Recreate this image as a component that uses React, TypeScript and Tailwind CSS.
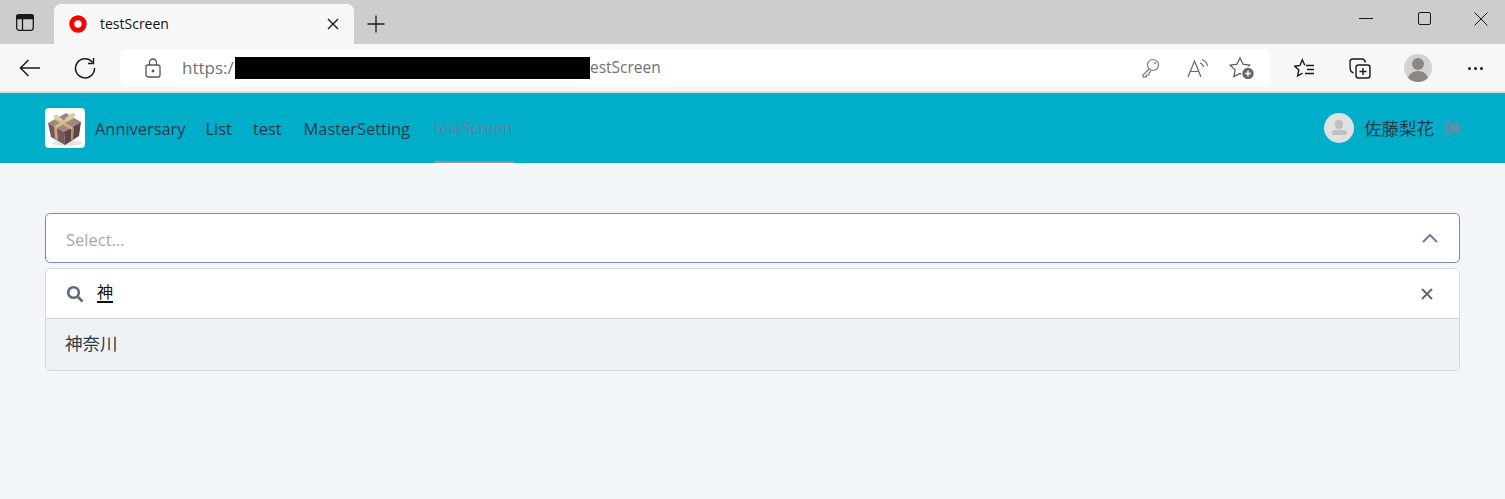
import React from "react";

const ui = { fontFamily: '"Open Sans","Noto Sans CJK JP",sans-serif' };
const cjk = { fontFamily: '"Noto Sans CJK JP",sans-serif' };

function Gift() {
  return (
    <svg width="40" height="40" viewBox="0 0 40 40" className="rounded-[4px] bg-white shrink-0">
      <ellipse cx="22" cy="35" rx="15" ry="3" fill="#e3e3ea" />
      <polygon points="3,15 21,5 36,14 19,24" fill="#a08680" />
      <polygon points="3,15 19,24 20,37 6,29" fill="#75595a" />
      <polygon points="19,24 36,14 34,28 20,37" fill="#5f4547" />
      <polygon points="9,11.500 12,10 29,20 26,21.500" fill="#cdb088" />
      <polygon points="26,8 29,10 12,20 9,18.500" fill="#d6bb92" />
      <polygon points="9,18.500 12,20 13,32 10,30.500" fill="#c8a878" />
      <polygon points="26,21.500 29,20 28,31 26,32.500" fill="#b3936a" />
      <path d="M19 13 C14 8 10 5 9 8 C8 11 14 13 19 13 C23 7 28 3 30 6 C31 10 24 13 19 13Z" fill="#e0c9a6" />
    </svg>
  );
}

function Tile({ children, w = "w-[46px]" }: { children: React.ReactNode; w?: string }) {
  return <div className={`${w} h-[38px] flex items-center justify-center shrink-0`}>{children}</div>;
}

export default function App() {
  return (
    <div className="w-[1505px] h-[499px] overflow-hidden flex flex-col bg-[#f3f6f9]" style={ui}>
      {/* tab strip */}
      <div className="h-[44px] bg-[#cdcdcd] flex items-end shrink-0">
        <div className="w-[50px] mr-[4px] h-[44px] flex items-center justify-center">
          <svg width="20" height="20" viewBox="0 0 20 20" fill="none" stroke="#1a1a1a" strokeWidth="1.300">
            <rect x="1.700" y="2.700" width="16.600" height="15.600" rx="2.500" />
            <path d="M2 3.500h16v3H2z" fill="#1a1a1a" />
            <path d="M7.500 6.500v11.500" />
          </svg>
        </div>
        <div className="w-[300px] h-[40px] bg-[#f7f7f7] rounded-t-[7px] flex items-center pl-[15px] pr-[15px]">
          <svg width="18" height="18" viewBox="0 0 18 18" className="shrink-0">
            <circle cx="9" cy="9" r="6.200" fill="none" stroke="#f60000" strokeWidth="5" />
          </svg>
          <span className="ml-[13px] text-[14px] text-[#111] flex-1 leading-none">testScreen</span>
          <svg width="12" height="12" viewBox="0 0 12 12" stroke="#1a1a1a" strokeWidth="1.400"><path d="M1 1l10 10M11 1L1 11" /></svg>
        </div>
        <div className="w-[43px] h-[40px] flex items-center justify-center">
          <svg width="18" height="18" viewBox="0 0 18 18" stroke="#1a1a1a" strokeWidth="1.300"><path d="M9 0.500v17M0.500 9h17" /></svg>
        </div>
        <div className="flex-1" />
        <div className="h-[44px] flex items-start pt-[12px]">
          <div className="w-[50px] flex justify-center pt-[6px]"><div className="w-[14px] h-[1px] bg-[#1a1a1a]" /></div>
          <div className="w-[66px] flex justify-center"><div className="w-[13px] h-[13px] border border-[#1a1a1a] rounded-[2px]" /></div>
          <div className="w-[48px] flex justify-center">
            <svg width="14" height="14" viewBox="0 0 14 14" stroke="#1a1a1a" strokeWidth="1"><path d="M0.500 0.500l13 13M13.500 0.500l-13 13" /></svg>
          </div>
        </div>
      </div>

      {/* toolbar */}
      <div className="h-[49px] pt-[1px] bg-[#f7f7f7] border-b-2 border-[#dcdcdc] flex items-center shrink-0">
        <Tile w="w-[60px]">
          <svg width="22" height="18" viewBox="0 0 22 18" fill="none" stroke="#1a1a1a" strokeWidth="1.500"><path d="M21 9H1.500M9.500 1L1.500 9l8 8" /></svg>
        </Tile>
        <Tile w="w-[50px] mr-[10px]">
          <svg width="22" height="22" viewBox="0 0 22 22" fill="none" stroke="#1a1a1a" strokeWidth="1.500"><path d="M18.500 5.500A9.500 9.500 0 1 0 20.500 11" /><path d="M19.500 1v5.500H14" /></svg>
        </Tile>
        <div className="w-[1150px] h-[38px] bg-white rounded-[7px] flex items-center pl-[24px] pr-[16px] shrink-0">
          <svg width="18" height="20" viewBox="0 0 18 20" fill="none" stroke="#555" strokeWidth="1.300">
            <rect x="2" y="7" width="14" height="12" rx="2" />
            <path d="M5.500 7V4.500a3.500 3.500 0 0 1 7 0V7" />
            <circle cx="9" cy="13" r="0.800" fill="#555" />
          </svg>
          <div className="ml-[20px] flex items-center flex-1 text-[16px] text-[#6f7276] whitespace-nowrap">
            <span className="w-[53px] text-[17px]">https:/</span>
            <div className="w-[355px] h-[22px] bg-black shrink-0" />
            <span className="text-[15.500px]">estScreen</span>
          </div>
          <div className="flex items-center gap-[21px] mr-[-1px]">
            <svg width="25" height="20" viewBox="0 0 25 20" fill="none" stroke="#777" strokeWidth="1.200" className="ml-[2px]">
              <circle cx="15" cy="7" r="5.500" /><circle cx="17" cy="5" r="0.900" fill="#777" stroke="none" />
              <path d="M11 11L5 17v1.800h3.500V17H11v-2l2-2" />
            </svg>
            <svg width="25" height="22" viewBox="0 0 25 22" fill="none" stroke="#666" strokeWidth="1.200" className="ml-[2px]">
              <path d="M2 20L8.500 4l6.500 16M4.500 14.500h8" /><path d="M14 6a5 5 0 0 1 3.500 4M16 2.500a9 9 0 0 1 5.500 6.500" />
            </svg>
            <svg width="26" height="24" viewBox="0 0 26 24" fill="none" stroke="#555" strokeWidth="1.200" className="ml-[-3px]">
              <path d="M11 2l3 6.200 6.800 1-4.900 4.700 1.200 6.700L11 17.400l-6.100 3.200 1.200-6.700L1.200 9.200l6.800-1z" />
              <circle cx="19" cy="17.500" r="6.300" fill="#666" stroke="#fff" strokeWidth="1.200" />
              <path d="M19 14.500v6M16 17.500h6" stroke="#fff" strokeWidth="1.400" />
            </svg>
          </div>
        </div>
        <Tile w="w-[46px] ml-[12px]">
          <svg width="22" height="20" viewBox="0 0 22 20" fill="none" stroke="#1a1a1a" strokeWidth="1.400">
            <path d="M10.800 7.200L8.300 1.800 6 7.400.8 8.200l4 3.800-1.200 6 4.900-2.800" />
            <path d="M12 7.500h8M13 11.500h7M11 15.500h9" />
          </svg>
        </Tile>
        <Tile w="w-[64px]">
          <svg width="22" height="22" viewBox="0 0 22 22" fill="none" stroke="#1a1a1a" strokeWidth="1.400">
            <rect x="7" y="8" width="14" height="13" rx="2.500" />
            <path d="M14 11v7M10.500 14.500h7" />
            <path d="M4.500 16C2 15.500 1.500 14 1.200 12L1 5c0-2 1-3 3-3h9c2 0 3 1.500 3.500 3.500" />
          </svg>
        </Tile>
        <Tile w="w-[30px] ml-[11px]">
          <div className="w-[28px] h-[28px] rounded-full bg-[#d5d2d0] overflow-hidden flex flex-col items-center">
            <div className="w-[12px] h-[12px] rounded-full bg-[#8b8784] mt-[4px]" />
            <div className="w-[22px] h-[12px] rounded-t-full bg-[#8b8784] mt-[1px]" />
          </div>
        </Tile>
        <Tile w="w-[60px] ml-[12px]">
          <div className="flex gap-[3px]">
            <div className="w-[3px] h-[3px] rounded-full bg-[#1a1a1a]" />
            <div className="w-[3px] h-[3px] rounded-full bg-[#1a1a1a]" />
            <div className="w-[3px] h-[3px] rounded-full bg-[#1a1a1a]" />
          </div>
        </Tile>
      </div>

      {/* app header */}
      <div className="h-[70px] bg-[#00aeca] flex items-center pl-[45px] pr-[44px] shrink-0">
        <Gift />
        <nav className="flex items-stretch h-[70px] ml-[10px] text-[16.400px] text-[#263a4a]">
          <a className="flex items-center pt-[2px]">Anniversary</a>
          <a className="flex items-center pt-[2px] ml-[20px]">List</a>
          <a className="flex items-center pt-[2px] ml-[21px]">test</a>
          <a className="flex items-center pt-[2px] ml-[22px]">MasterSetting</a>
          <a className="flex items-center w-[80px] ml-[24px] text-[16px] text-[#6b7f9c] border-b-2 border-[#9c8da0] pt-[2px]">testScreen</a>
        </nav>
        <div className="flex-1" />
        <div className="flex items-center">
          <div className="w-[30px] h-[30px] rounded-full bg-[#e0e0e0] flex flex-col items-center overflow-hidden">
            <div className="w-[8px] h-[9px] rounded-full bg-[#bfbfbf] mt-[7px]" />
            <div className="w-[15px] h-[5px] rounded-t-[3px] bg-[#bfbfbf] mt-[1px]" />
          </div>
          <span className="ml-[10px] text-[17.500px] leading-none text-[#263a4a]" style={cjk}>佐藤梨花</span>
          <svg width="16" height="14" viewBox="0 0 16 14" className="ml-[11px]">
            <path d="M6 1.500H3.500A2.500 2.500 0 0 0 1 4v6a2.500 2.500 0 0 0 2.500 2.500H6" fill="none" stroke="#7e83a3" strokeWidth="2" />
            <path d="M9.500 1L16 7l-6.500 6V9.500H5v-5h4.500z" fill="#7e83a3" />
          </svg>
        </div>
      </div>

      {/* content */}
      <div className="px-[45px] pt-[50px]">
        <div className="h-[50px] bg-white border border-[#7c8ba3] rounded-[5px] flex items-center pl-[20px] pr-[21px]">
          <span className="flex-1 text-[16.500px] text-[#a8a8a8] pt-[4px]">Select...</span>
          <svg width="16" height="10" viewBox="0 0 16 10" fill="none" stroke="#708090" strokeWidth="2"><path d="M1 9l7-7 7 7" /></svg>
        </div>
        <div className="mt-[5px] border border-[#d3d9e0] rounded-[5px] overflow-hidden">
          <div className="h-[50px] bg-white border-b border-[#ced4da] flex items-center pl-[20px] pr-[26px]">
            <svg width="18" height="18" viewBox="0 0 18 18" fill="none" stroke="#5a6b7c" strokeWidth="2.600">
              <circle cx="7.500" cy="7.500" r="5.300" /><path d="M11.500 11.500L16.500 16.500" />
            </svg>
            <span className="ml-[13px] flex-1 text-[16px] leading-[22px] text-[#111] mb-[4px]">
              <span className="underline underline-offset-[3px] decoration-[1.500px]" style={cjk}>神</span>
            </span>
            <svg width="12" height="12" viewBox="0 0 12 12" stroke="#5f6b65" strokeWidth="2"><path d="M1 1l10 10M11 1L1 11" /></svg>
          </div>
          <div className="h-[51px] bg-[#eff2f5] flex items-center pl-[19px]">
            <span className="text-[17.500px] text-[#2f3b45] mb-[2px]" style={cjk}>神奈川</span>
          </div>
        </div>
      </div>
    </div>
  );
}
